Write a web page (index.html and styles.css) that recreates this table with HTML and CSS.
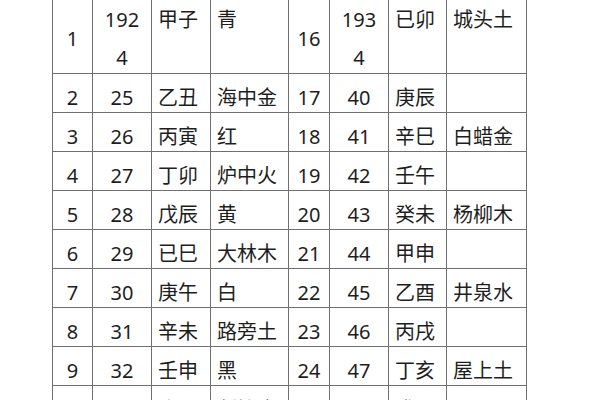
FILE: index.html
```html
<!DOCTYPE html>
<html lang="zh-CN">
<head>
<meta charset="utf-8">
<title>六十甲子表</title>
<link rel="stylesheet" href="styles.css">
</head>
<body>
<div class="sheet" role="table">
  <div class="cell c">1</div><div class="cell c"><span class="yr">1924</span></div><div class="cell l top">甲子</div><div class="cell l top">青</div><div class="cell c">16</div><div class="cell c"><span class="yr">1934</span></div><div class="cell l top">已卯</div><div class="cell l top">城头土</div>
  <div class="cell c">2</div><div class="cell c">25</div><div class="cell l">乙丑</div><div class="cell l">海中金</div><div class="cell c">17</div><div class="cell c">40</div><div class="cell l">庚辰</div><div class="cell l"></div>
  <div class="cell c">3</div><div class="cell c">26</div><div class="cell l">丙寅</div><div class="cell l">红</div><div class="cell c">18</div><div class="cell c">41</div><div class="cell l">辛巳</div><div class="cell l">白蜡金</div>
  <div class="cell c">4</div><div class="cell c">27</div><div class="cell l">丁卯</div><div class="cell l">炉中火</div><div class="cell c">19</div><div class="cell c">42</div><div class="cell l">壬午</div><div class="cell l"></div>
  <div class="cell c">5</div><div class="cell c">28</div><div class="cell l">戊辰</div><div class="cell l">黄</div><div class="cell c">20</div><div class="cell c">43</div><div class="cell l">癸未</div><div class="cell l">杨柳木</div>
  <div class="cell c">6</div><div class="cell c">29</div><div class="cell l">已巳</div><div class="cell l">大林木</div><div class="cell c">21</div><div class="cell c">44</div><div class="cell l">甲申</div><div class="cell l"></div>
  <div class="cell c">7</div><div class="cell c">30</div><div class="cell l">庚午</div><div class="cell l">白</div><div class="cell c">22</div><div class="cell c">45</div><div class="cell l">乙酉</div><div class="cell l">井泉水</div>
  <div class="cell c">8</div><div class="cell c">31</div><div class="cell l">辛未</div><div class="cell l">路旁土</div><div class="cell c">23</div><div class="cell c">46</div><div class="cell l">丙戌</div><div class="cell l"></div>
  <div class="cell c">9</div><div class="cell c">32</div><div class="cell l">壬申</div><div class="cell l">黑</div><div class="cell c">24</div><div class="cell c">47</div><div class="cell l">丁亥</div><div class="cell l">屋上土</div>
  <div class="cell c">10</div><div class="cell c">33</div><div class="cell l">癸酉</div><div class="cell l">剑锋金</div><div class="cell c">25</div><div class="cell c">48</div><div class="cell l">戊子</div><div class="cell l"></div>
</div>
</body>
</html>
```

FILE: styles.css
```css
html {
  overflow: hidden;
  background: #ffffff;
}

body {
  margin: 0;
  background: #ffffff;
}

.sheet {
  display: grid;
  width: max-content;
  grid-template-columns: 39px 58px 58px 77px 40px 58px 57px 79px;
  grid-template-rows: 77px repeat(9, 38px);
  gap: 1px;
  margin: -5px 0 0 52px;
  border: 1px solid #707070;
  background: #707070;
  font-family: "Noto Sans", "Noto Sans CJK SC", sans-serif;
  font-size: 20px;
  line-height: 30px;
  color: #1e1e1e;
}

.cell {
  display: flex;
  align-items: center;
  padding-top: 9px;
  background: #ffffff;
  white-space: nowrap;
  overflow: visible;
}

.c {
  justify-content: center;
}

.l {
  justify-content: flex-start;
  padding-left: 6px;
}

.top {
  align-items: flex-start;
}

.yr {
  width: 3.2ch;
  white-space: normal;
  word-break: break-all;
  text-align: center;
  line-height: 38px;
}
```
